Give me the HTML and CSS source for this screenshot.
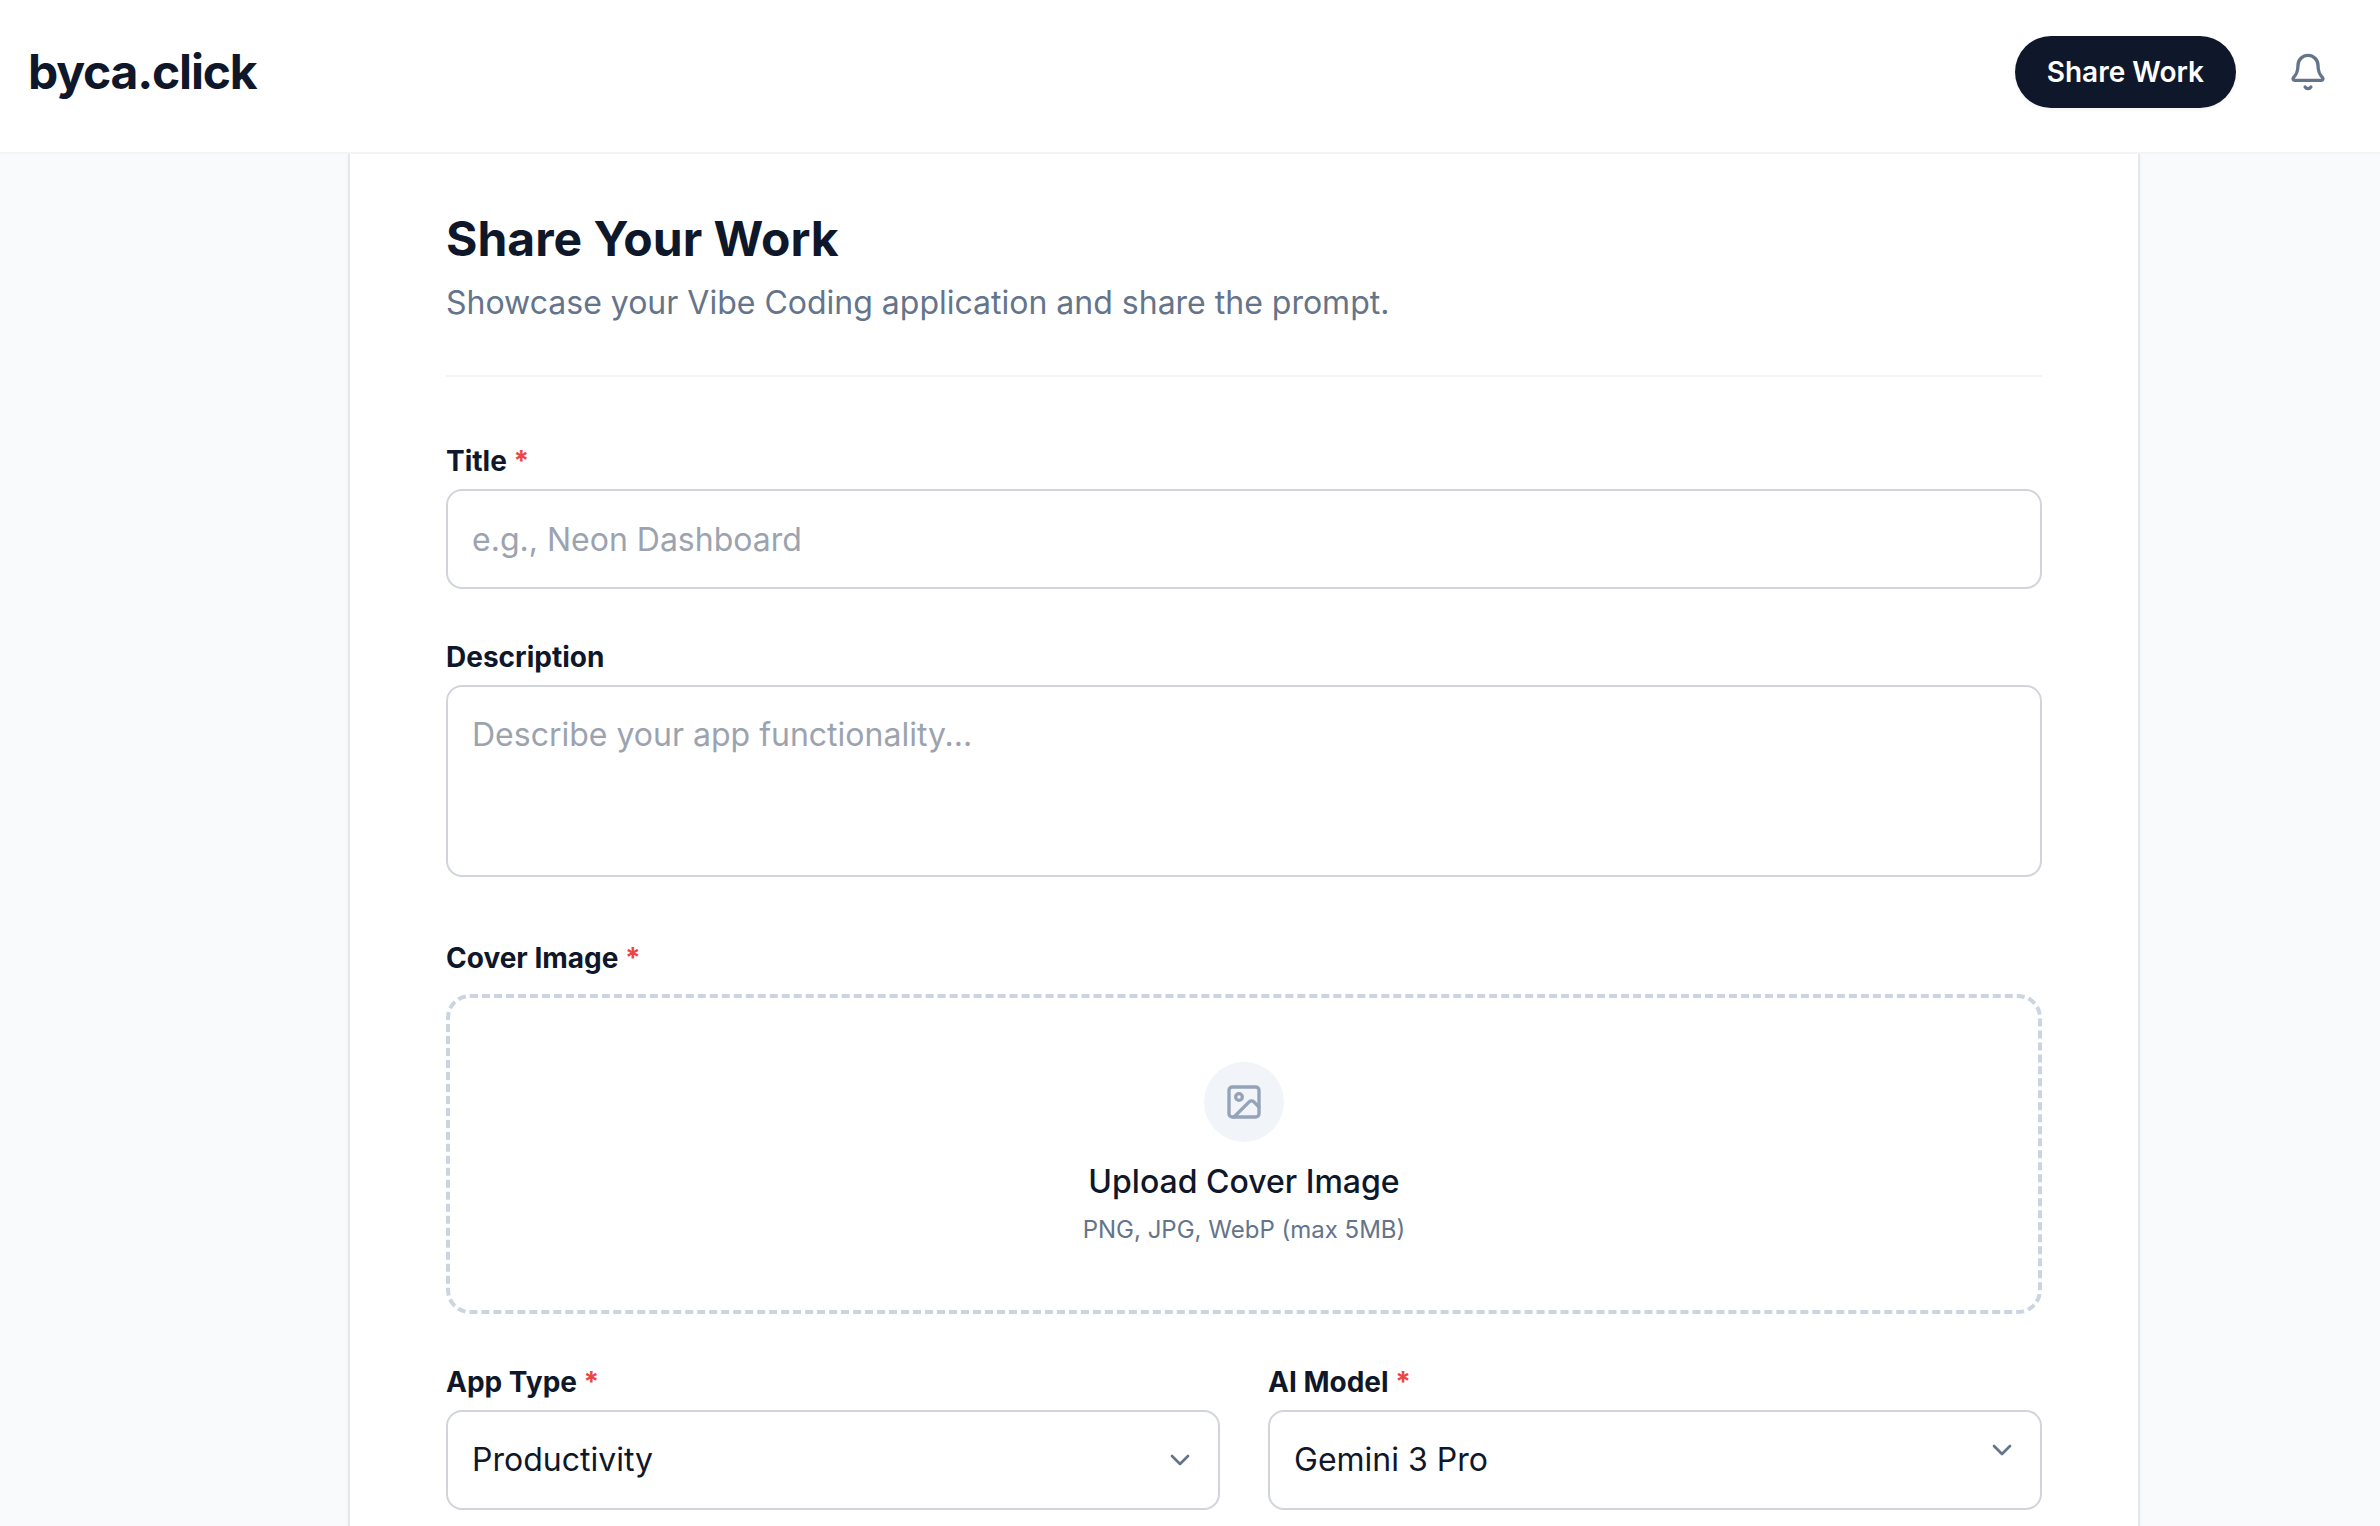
FILE: index.html
```html
<!DOCTYPE html>
<html lang="en">
<head>
  <meta charset="utf-8">
  <meta name="viewport" content="width=device-width, initial-scale=1">
  <title>Share Your Work - byca.click</title>
  <link rel="stylesheet" href="styles.css">
</head>
<body>
  <header class="site-header">
    <a class="logo" href="#">byca.click</a>
    <div class="header-actions">
      <button class="share-button" type="button">Share Work</button>
      <button class="bell-button" type="button" aria-label="Notifications">
        <svg class="icon icon-large" viewBox="0 0 24 24" aria-hidden="true">
          <path d="M10.268 21a2 2 0 0 0 3.464 0"/>
          <path d="M3.262 15.326A1 1 0 0 0 4 17h16a1 1 0 0 0 .74-1.673C19.41 13.956 18 12.499 18 8A6 6 0 0 0 6 8c0 4.499-1.411 5.956-2.738 7.326"/>
        </svg>
      </button>
    </div>
  </header>

  <main class="page">
    <form class="card">
      <div class="card-heading">
        <h1 class="title">Share Your Work</h1>
        <p class="subtitle">Showcase your Vibe Coding application and share the prompt.</p>
      </div>

      <div class="fields">
        <div class="field">
          <label class="label" for="title">Title <span class="required">*</span></label>
          <input class="control" id="title" type="text" placeholder="e.g., Neon Dashboard" required>
        </div>

        <div class="field">
          <label class="label" for="description">Description</label>
          <textarea class="control control-area" id="description" placeholder="Describe your app functionality..."></textarea>
        </div>

        <div class="field">
          <label class="label label-spaced" for="cover">Cover Image <span class="required">*</span></label>
          <button class="upload" id="cover" type="button">
            <span class="upload-badge">
              <svg class="icon icon-large" viewBox="0 0 24 24" aria-hidden="true">
                <rect width="18" height="18" x="3" y="3" rx="2" ry="2"/>
                <circle cx="9" cy="9" r="2"/>
                <path d="m21 15-3.086-3.086a2 2 0 0 0-2.828 0L6 21"/>
              </svg>
            </span>
            <span class="upload-title">Upload Cover Image</span>
            <span class="upload-hint">PNG, JPG, WebP (max 5MB)</span>
          </button>
        </div>

        <div class="field-row">
          <div class="field">
            <label class="label" for="app-type">App Type <span class="required">*</span></label>
            <div class="select-wrap">
              <select class="control" id="app-type">
                <option>Productivity</option>
              </select>
              <svg class="icon chevron chevron-middle" viewBox="0 0 24 24" aria-hidden="true"><path d="m6 9 6 6 6-6"/></svg>
            </div>
          </div>
          <div class="field">
            <label class="label" for="ai-model">AI Model <span class="required">*</span></label>
            <div class="select-wrap">
              <select class="control" id="ai-model">
                <option>Gemini 3 Pro</option>
              </select>
              <svg class="icon chevron chevron-top" viewBox="0 0 24 24" aria-hidden="true"><path d="m6 9 6 6 6-6"/></svg>
            </div>
          </div>
        </div>
      </div>
    </form>
  </main>
</body>
</html>
```
FILE: styles.css
```css
*,
*::before,
*::after {
  box-sizing: border-box;
}

body {
  display: flex;
  flex-direction: column;
  min-height: 100vh;
  margin: 0;
  background: #f8fafc;
  color: #0f172a;
  font-family: Inter, "Liberation Sans", sans-serif;
  font-size: 32px;
  line-height: 48px;
}

button,
input,
select,
textarea {
  margin: 0;
  font: inherit;
  color: inherit;
}

.icon {
  display: block;
  fill: none;
  stroke: currentColor;
  stroke-width: 2;
  stroke-linecap: round;
  stroke-linejoin: round;
}

.icon-large {
  width: 40px;
  height: 40px;
}

/* Header */

.site-header {
  position: relative;
  display: flex;
  align-items: center;
  justify-content: space-between;
  padding: 36px 32px 44px 28px;
  background: #fff;
  border-bottom: 2px solid #f3f4f6;
}

.logo {
  color: #0f172a;
  font-size: 48px;
  font-weight: 700;
  letter-spacing: -0.025em;
  line-height: 64px;
  text-decoration: none;
}

.header-actions {
  display: flex;
  align-items: center;
  gap: 32px;
}

.share-button {
  padding: 16px 32px;
  border: 0;
  border-radius: 36px;
  background: #0f172a;
  box-shadow: 0 2px 4px rgba(0, 0, 0, 0.05);
  color: #fff;
  font-size: 28px;
  font-weight: 600;
  line-height: 40px;
}

.bell-button {
  padding: 16px 20px;
  border: 0;
  background: none;
  color: #64748b;
}

/* Form card */

.page {
  display: flex;
  flex: 1;
  justify-content: center;
  padding-left: 108px;
}

.card {
  width: 100%;
  max-width: 1792px;
  padding: 53px 96px 16px;
  background: #fff;
  border: solid #e5e7eb;
  border-width: 0 2px;
  box-shadow: 0 2px 4px rgba(0, 0, 0, 0.05);
}

.card-heading {
  margin-bottom: 64px;
  padding-bottom: 48px;
  border-bottom: 2px solid #f3f4f6;
}

.title {
  margin: 0 0 8px;
  font-size: 48px;
  font-weight: 700;
  line-height: 64px;
}

.subtitle {
  margin: 0;
  color: #64748b;
}

.fields {
  display: flex;
  flex-direction: column;
  gap: 48px;
}

.field-row {
  display: grid;
  grid-template-columns: 1fr 1fr;
  gap: 48px;
}

.label {
  display: block;
  margin-bottom: 8px;
  font-size: 28px;
  font-weight: 700;
  line-height: 40px;
}

.label-spaced {
  margin-bottom: 16px;
}

.required {
  color: #ef4444;
}

.control {
  display: block;
  width: 100%;
  height: 100px;
  padding: 24px;
  border: 2px solid #d1d5db;
  border-radius: 16px;
  background: #fff;
  appearance: none;
}

.control::placeholder {
  color: #9ca3af;
  opacity: 1;
}

.control-area {
  display: inline-block;
  height: 192px;
  resize: none;
}

.select-wrap {
  position: relative;
}

.chevron {
  position: absolute;
  right: 24px;
  width: 32px;
  height: 32px;
  color: #64748b;
  pointer-events: none;
}

.chevron-middle {
  top: 34px;
}

.chevron-top {
  top: 24px;
}

/* Cover upload */

.upload {
  display: flex;
  flex-direction: column;
  align-items: center;
  width: 100%;
  padding: 64px;
  border: 4px dashed #cbd5e1;
  border-radius: 24px;
  background: #fff;
}

.upload-badge {
  display: grid;
  place-items: center;
  width: 80px;
  height: 80px;
  margin-bottom: 16px;
  border-radius: 50%;
  background: #f1f5f9;
  color: #94a3b8;
}

.upload-title {
  font-weight: 500;
}

.upload-hint {
  margin-top: 8px;
  color: #64748b;
  font-size: 24px;
  line-height: 32px;
}
```
